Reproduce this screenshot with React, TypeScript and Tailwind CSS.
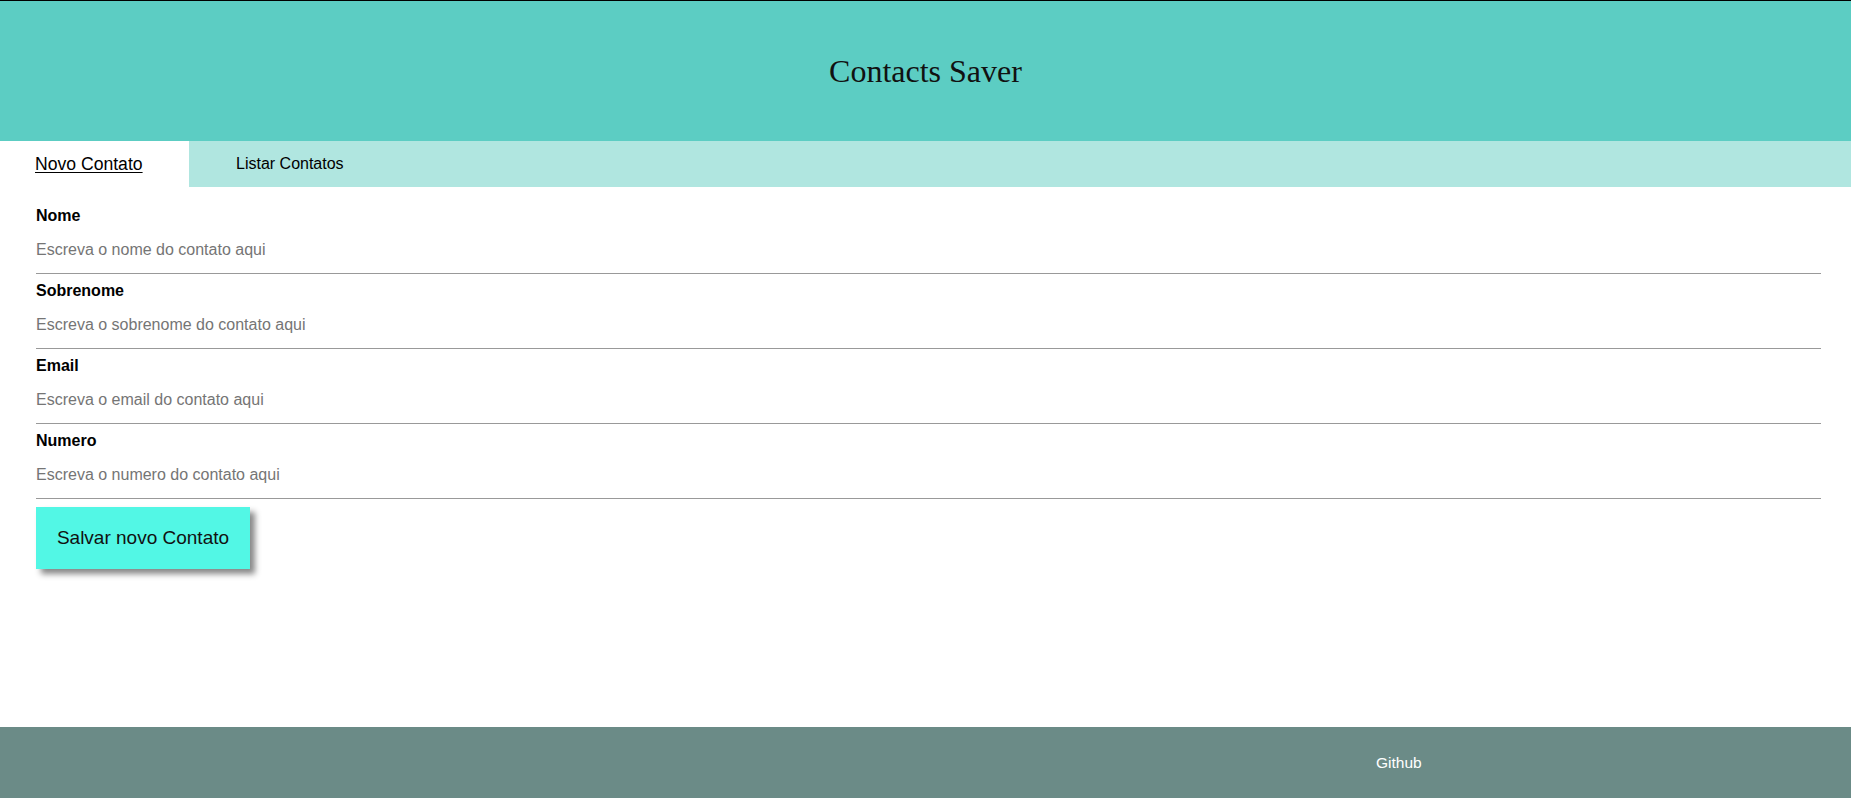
const fields = [
  { label: 'Nome', placeholder: 'Escreva o nome do contato aqui' },
  { label: 'Sobrenome', placeholder: 'Escreva o sobrenome do contato aqui' },
  { label: 'Email', placeholder: 'Escreva o email do contato aqui' },
  { label: 'Numero', placeholder: 'Escreva o numero do contato aqui' },
];

export default function App() {
  return (
    <div className="min-h-screen flex flex-col bg-white font-['Liberation_Sans',Arial,sans-serif] text-black">
      {/* Header */}
      <header className="h-[141px] border-t border-black bg-[#5ccdc3] flex items-center justify-center">
        <h1 className="font-['Liberation_Serif','Times_New_Roman',serif] text-[32px] text-[#111] leading-none">
          Contacts Saver
        </h1>
      </header>

      {/* Tabs */}
      <nav className="h-[46px] flex bg-[#b0e6e0]">
        <div className="w-[189px] bg-white flex items-center pl-[35px]">
          <span className="text-[17.6px] underline underline-offset-2">Novo Contato</span>
        </div>
        <div className="flex items-center pl-[47px]">
          <span className="text-[16px]">Listar Contatos</span>
        </div>
      </nav>

      {/* Form */}
      <main className="flex-1 pt-[20px] pl-[36px] pr-[30px]">
        <form className="flex flex-col">
          {fields.map((field) => (
            <div key={field.label} className="flex flex-col mb-[8px]">
              <label className="text-[16px] font-bold leading-[18px]">{field.label}</label>
              <input
                type="text"
                placeholder={field.placeholder}
                className="w-full h-[49px] pt-[15px] pb-[13px] text-[16px] leading-[20px] border-b border-[#999] outline-none bg-transparent placeholder:text-[#757575]"
              />
            </div>
          ))}
          <div>
            <button
              type="button"
              className="h-[62px] w-[214px] bg-[#52f7e5] text-[19px] text-[#111] shadow-[5px_5px_6px_#888]"
            >
              Salvar novo Contato
            </button>
          </div>
        </form>
      </main>

      {/* Footer */}
      <footer className="h-[71px] bg-[#6b8b87] flex items-center pl-[1376px]">
        <a className="text-white text-[15.5px]">Github</a>
      </footer>
    </div>
  );
}
